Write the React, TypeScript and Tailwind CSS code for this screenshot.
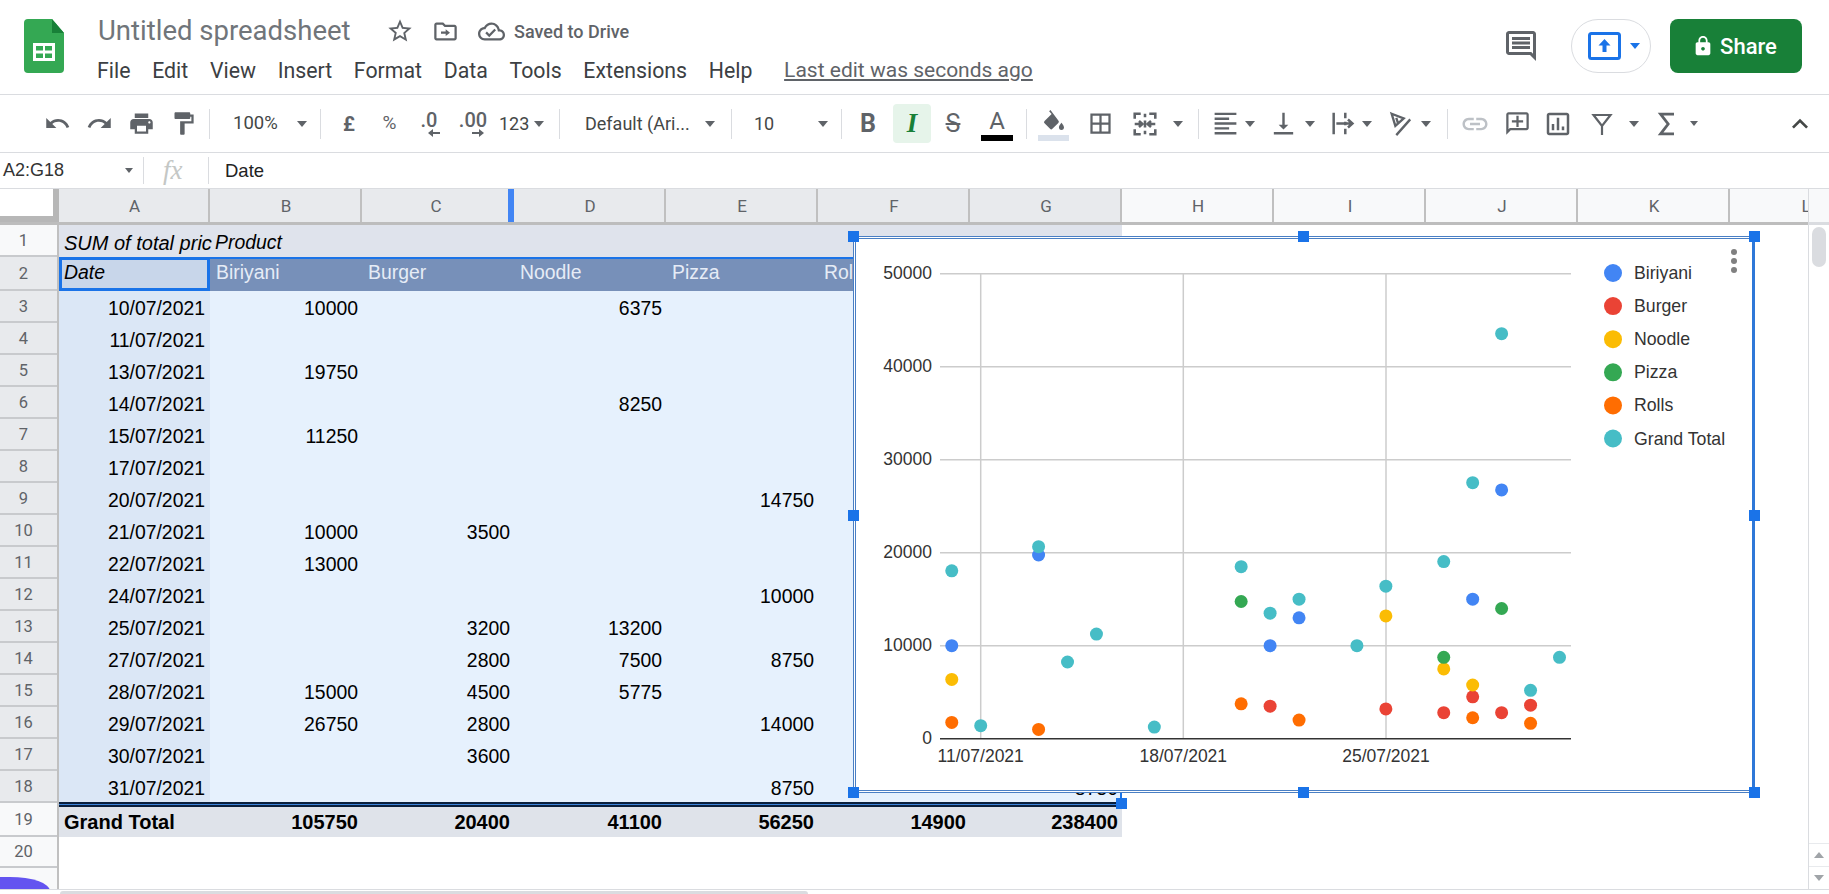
import React from "react";

const icons = {
  undo: "M12.5 8c-2.65 0-5.05.99-6.9 2.6L2 7v9h9l-3.62-3.62c1.39-1.16 3.16-1.88 5.12-1.88 3.54 0 6.55 2.31 7.6 5.5l2.37-.78C21.08 11.03 17.15 8 12.5 8z",
  redo: "M18.4 10.6C16.55 8.99 14.15 8 11.5 8c-4.65 0-8.58 3.03-9.96 7.22L3.9 16c1.05-3.19 4.05-5.5 7.6-5.5 1.95 0 3.73.72 5.12 1.88L13 16h9V7l-3.6 3.6z",
  print: "M19 8H5c-1.66 0-3 1.34-3 3v6h4v4h12v-4h4v-6c0-1.66-1.34-3-3-3zm-3 11H8v-5h8v5zm3-7c-.55 0-1-.45-1-1s.45-1 1-1 1 .45 1 1-.45 1-1 1zm-1-9H6v4h12V3z",
  paint: "M18 4V3c0-.55-.45-1-1-1H5c-.55 0-1 .45-1 1v4c0 .55.45 1 1 1h12c.55 0 1-.45 1-1V6h1v4H9v11c0 .55.45 1 1 1h2c.55 0 1-.45 1-1v-9h8V4h-3z",
  borders: "M3 3v18h18V3H3zm8 16H5v-6h6v6zm0-8H5V5h6v6zm8 8h-6v-6h6v6zm0-8h-6V5h6v6z",
  align: "M15 15H3v2h12v-2zm0-8H3v2h12V7zM3 13h18v-2H3v2zm0 8h18v-2H3v2zM3 3v2h18V3H3z",
  valign: "M16 13h-3V3h-2v10H8l4 4 4-4zM4 19v2h16v-2H4z",
  link: "M3.9 12c0-1.71 1.39-3.1 3.1-3.1h4V7H7c-2.76 0-5 2.24-5 5s2.24 5 5 5h4v-1.9H7c-1.71 0-3.1-1.39-3.1-3.1zM8 13h8v-2H8v2zm9-6h-4v1.9h4c1.71 0 3.1 1.39 3.1 3.1s-1.39 3.1-3.1 3.1h-4V17h4c2.76 0 5-2.24 5-5s-2.24-5-5-5z",
  addComment: "M22 4c0-1.1-.9-2-2-2H4c-1.1 0-2 .9-2 2v12c0 1.1.9 2 2 2h14l4 4V4zm-2 13.17L18.83 16H4V4h16v13.17zM13 5h-2v4H7v2h4v4h2v-4h4V9h-4z",
  chart: "M19 3H5c-1.1 0-2 .9-2 2v14c0 1.1.9 2 2 2h14c1.1 0 2-.9 2-2V5c0-1.1-.9-2-2-2zm0 16H5V5h14v14zM7 12h2v5H7zm4-5h2v10h-2zm4 7h2v3h-2z",
  chevronUp: "M12 8l-6 6 1.41 1.41L12 10.83l4.59 4.58L18 14z",
  star: "M22 9.24l-7.19-.62L12 2 9.19 8.63 2 9.24l5.46 4.73L5.82 21 12 17.27 18.18 21l-1.63-7.03L22 9.24zM12 15.4l-3.76 2.27 1-4.28-3.32-2.88 4.38-.38L12 6.1l1.71 4.04 4.38.38-3.32 2.88 1 4.28L12 15.4z",
  move: "M20 6h-8l-2-2H4c-1.1 0-1.99.9-1.99 2L2 18c0 1.1.9 2 2 2h16c1.1 0 2-.9 2-2V8c0-1.1-.9-2-2-2zm0 12H4V6h5.17l2 2H20v10zM12.16 16l3.84-3-3.84-3v2H8v2h4.16v2z",
  cloud: "M19.35 10.04C18.67 6.59 15.64 4 12 4 9.11 4 6.6 5.64 5.35 8.04 2.34 8.36 0 10.91 0 14c0 3.31 2.69 6 6 6h13c2.76 0 5-2.24 5-5 0-2.64-2.05-4.78-4.65-4.96zM19 18H6c-2.21 0-4-1.79-4-4 0-2.05 1.53-3.76 3.56-3.97l1.07-.11.5-.95C8.08 7.14 9.94 6 12 6c2.62 0 4.88 1.86 5.39 4.43l.3 1.5 1.53.11c1.56.1 2.78 1.41 2.78 2.96 0 1.65-1.35 3-3 3zm-9-3.82l-2.09-2.09L6.5 13.5 10 17l6.01-6.01-1.41-1.41z",
  comments: "M21.99 4c0-1.1-.89-2-1.99-2H4c-1.1 0-2 .9-2 2v12c0 1.1.9 2 2 2h14l4 4-.01-18zM20 4v13.17L18.83 16H4V4h16zM6 12h12v2H6zm0-3h12v2H6zm0-3h12v2H6z",
  lock: "M18 8h-1V6c0-2.76-2.24-5-5-5S7 3.24 7 6v2H6c-1.1 0-2 .9-2 2v10c0 1.1.9 2 2 2h12c1.1 0 2-.9 2-2V10c0-1.1-.9-2-2-2zm-6 9c-1.1 0-2-.9-2-2s.9-2 2-2 2 .9 2 2-.9 2-2 2zm3.1-9H8.9V6c0-1.71 1.39-3.1 3.1-3.1 1.71 0 3.1 1.39 3.1 3.1v2z",
};

function Icon({ d, className = "w-[27px] h-[27px]" }: { d: string; className?: string }) {
  return (
    <svg viewBox="0 0 24 24" fill="currentColor" className={className}>
      <path d={d} />
    </svg>
  );
}

function Slot({ className = "", children }: { className?: string; children: React.ReactNode }) {
  return <div className={`flex h-[40px] shrink-0 items-center justify-center ${className}`}>{children}</div>;
}

function Caret({ className = "" }: { className?: string }) {
  return (
    <svg viewBox="0 0 10 6" fill="currentColor" className={`h-[6px] w-[10px] shrink-0 ${className}`}>
      <path d="M0 0h10L5 6z" />
    </svg>
  );
}

function Sep({ className = "" }: { className?: string }) {
  return <div className={`h-[30px] w-px shrink-0 bg-[#dadce0] ${className}`} />;
}

function Header() {
  const menu = ["File", "Edit", "View", "Insert", "Format", "Data", "Tools", "Extensions", "Help"];
  return (
    <div className="flex h-[95px] shrink-0 border-b-[1.5px] border-[#dadce0]">
      <svg viewBox="0 0 40 54" className="ml-[24px] mt-[19px] h-[54px] w-[40px] shrink-0">
        <path d="M4 0h24l12 14v36a4 4 0 0 1-4 4H4a4 4 0 0 1-4-4V4a4 4 0 0 1 4-4z" fill="#34a853" />
        <path d="M28 0l12 14H28z" fill="#188038" />
        <path d="M9 24h22v18H9z" fill="#fff" />
        <path d="M12 27h7v4.5h-7zM21 27h7v4.5h-7zM12 34.500h7V39h-7zM21 34.500h7V39h-7z" fill="#34a853" />
      </svg>
      <div className="ml-[34px] flex flex-col">
        <div className="mt-[12px] flex h-[38px] items-center text-[#5f6368]">
          <span className="w-[283px] whitespace-nowrap text-[27.500px] text-[#70757a]">Untitled spreadsheet</span>
          <Icon d={icons.star} className="ml-[5px] h-[28px] w-[28px]" />
          <Icon d={icons.move} className="ml-[18px] h-[27px] w-[27px]" />
          <Icon d={icons.cloud} className="ml-[19px] h-[27px] w-[27px]" />
          <span className="ml-[9px] text-[18px] font-medium">Saved to Drive</span>
        </div>
        <div className="-ml-[1px] mt-[3px] flex h-[36px] items-center gap-[21.700px] text-[21.300px] text-[#3c4043]">
          {menu.map((m) => (
            <span key={m}>{m}</span>
          ))}
          <span className="ml-[10px] text-[21px] text-[#5f6368] underline underline-offset-2">Last edit was seconds ago</span>
        </div>
      </div>
      <div className="ml-auto mt-[19px] flex h-[54px] items-center pr-[27px]">
        <Icon d={icons.comments} className="h-[36px] w-[36px] text-[#5f6368]" />
        <div className="ml-[32px] flex h-[54px] w-[80px] items-center rounded-full border border-[#dadce0] pl-[16px] text-[#1a73e8]">
          <svg viewBox="0 0 33 28" className="h-[28px] w-[33px]">
            <rect x="1.500" y="1.500" width="30" height="25" rx="2" fill="none" stroke="currentColor" strokeWidth="3" />
            <path d="M16.500 7l6 6.500h-4V20h-4v-6.500h-4z" fill="currentColor" />
          </svg>
          <Caret className="ml-[9px]" />
        </div>
        <div className="ml-[19px] flex h-[54px] w-[132px] items-center justify-center gap-[6px] rounded-lg bg-[#188038] pr-[3px] text-[22px] font-medium text-white">
          <Icon d={icons.lock} className="h-[22px] w-[22px]" />
          Share
        </div>
      </div>
    </div>
  );
}

function Toolbar() {
  return (
    <div className="flex h-[58px] shrink-0 items-center border-b-[1.5px] border-[#dadce0] pl-[36px] text-[#5f6368]">
      <Slot className="w-[42px]"><Icon d={icons.undo} /></Slot>
      <Slot className="w-[42px]"><Icon d={icons.redo} /></Slot>
      <Slot className="w-[42px]"><Icon d={icons.print} /></Slot>
      <Slot className="w-[42px]"><Icon d={icons.paint} /></Slot>
      <Sep className="ml-[5px]" />
      <span className="ml-[23px] w-[43px] shrink-0 text-[18.500px] text-[#444746]">100%</span>
      <Caret className="ml-[21px]" />
      <Sep className="ml-[13px]" />
      <Slot className="ml-[8px] w-[40px] text-[20px] font-bold">£</Slot>
      <Slot className="w-[41px] text-[19px]">%</Slot>
      <Slot className="w-[38px]">
        <div className="flex flex-col items-center text-[20px] font-medium leading-[20px]">
          .0
          <svg viewBox="0 0 12 8" className="-mt-[1px] ml-[10px] h-[8px] w-[12px]" fill="currentColor"><path d="M0 4l5-4v3h7v2H5v3z" /></svg>
        </div>
      </Slot>
      <Slot className="ml-[5px] w-[40px]">
        <div className="flex flex-col items-center text-[20px] font-medium leading-[20px]">
          .00
          <svg viewBox="0 0 12 8" className="-mt-[1px] ml-[10px] h-[8px] w-[12px]" fill="currentColor"><path d="M12 4L7 0v3H0v2h7v3z" /></svg>
        </div>
      </Slot>
      <span className="ml-[6px] w-[31px] shrink-0 text-[18px] text-[#444746]">123</span>
      <Caret className="ml-[4px]" />
      <Sep className="ml-[15px]" />
      <span className="ml-[25px] w-[104px] shrink-0 whitespace-nowrap text-[18px] text-[#444746]">Default (Ari...</span>
      <Caret className="ml-[16px]" />
      <Sep className="ml-[16px]" />
      <span className="ml-[22px] w-[20px] shrink-0 text-[18px] text-[#444746]">10</span>
      <Caret className="ml-[44px]" />
      <Sep className="ml-[13px]" />
      <Slot className="ml-[6px] w-[40px] text-[25px] font-bold">B</Slot>
      <Slot className="ml-[5px] !h-[39px] w-[38px] rounded bg-[#e6f4ea] text-[27px] font-bold italic text-[#188038] [font-family:'Liberation_Serif',serif]">I</Slot>
      <Slot className="ml-[2px] w-[40px] text-[25px] line-through">S</Slot>
      <Slot className="ml-[4px] w-[40px]">
        <div className="flex flex-col items-center text-[24px] leading-[28px]">
          A
          <div className="h-[6px] w-[32px] bg-black" />
        </div>
      </Slot>
      <Sep className="ml-[9px]" />
      <Slot className="ml-[6px] w-[40px]">
        <div className="flex flex-col items-center">
          <svg viewBox="0 0 28 26" className="mt-[3px] h-[22px] w-[24px]" fill="currentColor">
            <path d="M11 0l-1.600 1.600 3 3L4 13a2 2 0 0 0 0 2.800l6.500 6.500a2 2 0 0 0 2.800 0l7-7a2 2 0 0 0 0-2.800zM24 15s-3 3.300-3 5.500a3 3 0 0 0 6 0c0-2.200-3-5.500-3-5.500z" />
          </svg>
          <div className="mt-[3px] h-[6px] w-[31px] bg-[#dbe2ec]" />
        </div>
      </Slot>
      <Slot className="ml-[7px] w-[40px]"><Icon d={icons.borders} /></Slot>
      <Slot className="ml-[5px] w-[40px]">
        <svg viewBox="0 0 28 28" className="h-[24px] w-[24px]" fill="none" stroke="currentColor" strokeWidth="3">
          <path d="M2 8V2h7M19 2h7v6M2 20v6h7M19 26h7v-6M14 2v4M14 22v4M14 10v8" />
          <path d="M2 14h8M7 10.500l4 3.500-4 3.500M26 14h-8M21 10.500L17 14l4 3.500" />
        </svg>
      </Slot>
      <Caret className="ml-[8px]" />
      <Sep className="ml-[15px]" />
      <Slot className="ml-[11px] w-[30px]"><Icon d={icons.align} className="h-[29px] w-[29px]" /></Slot>
      <Caret className="ml-[5px]" />
      <Slot className="ml-[13px] w-[30px]"><Icon d={icons.valign} className="h-[29px] w-[29px]" /></Slot>
      <Caret className="ml-[7px]" />
      <Slot className="ml-[13px] w-[30px]">
        <svg viewBox="0 0 28 28" className="h-[25px] w-[25px]" fill="none" stroke="currentColor" strokeWidth="2.800">
          <path d="M3 2v24M16 2v6M16 20v6M16 12v4M6 14h18M19 9.500l5 4.500-5 4.500" />
        </svg>
      </Slot>
      <Caret className="ml-[4px]" />
      <Slot className="ml-[13px] w-[30px]">
        <svg viewBox="0 0 28 28" className="h-[26px] w-[26px]" fill="none" stroke="currentColor" strokeWidth="2.500">
          <path d="M5 3l13 5-9 8zM10 7.500l2 6M10 26L25 9" />
        </svg>
      </Slot>
      <Caret className="ml-[6px]" />
      <Sep className="ml-[16px]" />
      <Slot className="ml-[7px] w-[40px] text-[#bdc1c6]"><Icon d={icons.link} className="h-[30px] w-[30px]" /></Slot>
      <Slot className="ml-[2px] w-[40px]"><Icon d={icons.addComment} className="h-[27px] w-[27px] -scale-x-100" /></Slot>
      <Slot className="ml-[1px] w-[40px]"><Icon d={icons.chart} className="h-[30px] w-[30px]" /></Slot>
      <Slot className="ml-[4px] w-[40px]">
        <svg viewBox="0 0 24 24" className="h-[24px] w-[24px]" fill="none" stroke="currentColor" strokeWidth="2.200">
          <path d="M3.500 3h17L12 14zM12 14v9" />
        </svg>
      </Slot>
      <Caret className="ml-[7px]" />
      <Slot className="ml-[8px] w-[40px]">
        <svg viewBox="0 0 24 24" className="h-[28px] w-[28px]" fill="none" stroke="currentColor" strokeWidth="2.400">
          <path d="M18 3.500H6.500L13 12l-6.500 8.500H18" />
        </svg>
      </Slot>
      <Caret className="ml-[3px] !h-[5px] !w-[8px]" />
      <Slot className="ml-auto mr-[9px] w-[40px]"><Icon d={icons.chevronUp} className="h-[32px] w-[32px] text-[#444746]" /></Slot>
    </div>
  );
}

function FormulaBar() {
  return (
    <div className="flex h-[36px] shrink-0 items-center border-b-[1.5px] border-[#dadce0] [font-family:'Liberation_Sans',sans-serif]">
      <span className="ml-[3px] w-[100px] text-[18px] text-[#333]">A2:G18</span>
      <Caret className="ml-[22px] !h-[5px] !w-[8px] text-[#5f6368]" />
      <div className="ml-[10px] h-[27px] w-px bg-[#dadce0]" />
      <span className="ml-[19px] w-[45px] text-[27px] italic text-[#c4c7c5] [font-family:'Liberation_Serif',serif]">fx</span>
      <div className="h-[27px] w-px bg-[#dadce0]" />
      <span className="ml-[16px] text-[18.500px] text-[#222]">Date</span>
    </div>
  );
}

function ColumnHeaders() {
  const selected = ["A", "B", "C", "D", "E", "F", "G"];
  const rest = ["H", "I", "J", "K", "L"];
  return (
    <div className="flex h-[36px] shrink-0 text-[17px] text-[#5f6368]">
      <div className="flex w-[1808px] overflow-hidden border-b-[3px] border-[#bdbdbd]">
        <div className="h-[33px] w-[59px] shrink-0">
          <div className="box-content h-[27px] w-[53px] border-b-[6px] border-r-[6px] border-[#b7b7b7]" />
        </div>
        {selected.map((c, i) => (
          <div
            key={c}
            className={`flex shrink-0 items-center justify-center border-r-2 bg-[#e8eaed] pl-[2px] pt-[2px] ${i === 0 ? "w-[151px]" : "w-[152px]"} ${c === "C" ? "!border-r-[6px] border-[#4285f4]" : "border-[#c0c0c0]"}`}
          >
            {c}
          </div>
        ))}
        {rest.map((c) => (
          <div key={c} className="flex w-[152px] shrink-0 items-center justify-center border-r-2 border-[#c0c0c0] bg-[#f8f9fa] pl-[2px] pt-[2px]">
            {c}
          </div>
        ))}
      </div>
      <div className="w-[21px] border-b-[3px] border-l border-[#dadce0] bg-[#f8f9fa]" />
    </div>
  );
}

const rows: string[][] = [
  ["10/07/2021", "10000", "", "6375", "", ""],
  ["11/07/2021", "", "", "", "", ""],
  ["13/07/2021", "19750", "", "", "", ""],
  ["14/07/2021", "", "", "8250", "", ""],
  ["15/07/2021", "11250", "", "", "", ""],
  ["17/07/2021", "", "", "", "", ""],
  ["20/07/2021", "", "", "", "14750", ""],
  ["21/07/2021", "10000", "3500", "", "", ""],
  ["22/07/2021", "13000", "", "", "", ""],
  ["24/07/2021", "", "", "", "10000", ""],
  ["25/07/2021", "", "3200", "13200", "", ""],
  ["27/07/2021", "", "2800", "7500", "8750", ""],
  ["28/07/2021", "15000", "4500", "5775", "", ""],
  ["29/07/2021", "26750", "2800", "", "14000", ""],
  ["30/07/2021", "", "3600", "", "", ""],
  ["31/07/2021", "", "", "", "8750", ""],
];

function RowHeaders() {
  const nums = Array.from({ length: 21 }, (_, i) => i + 1);
  return (
    <div className="flex w-[59px] shrink-0 flex-col border-r-2 border-[#c0c0c0] text-[16.500px] text-[#5f6368]">
      {nums.map((n) => {
        const active = n >= 2 && n <= 18;
        const h = n === 2 || n === 19 ? "h-[34px]" : n === 20 ? "h-[31px]" : "h-[32px]";
        return (
          <div key={n} className={`flex shrink-0 items-center justify-center border-b-2 border-[#c8cacd] pr-[10px] pt-[2px] ${h} ${active ? "bg-[#e8eaed]" : "bg-[#f8f9fa]"}`}>
            {n <= 20 ? n : ""}
          </div>
        );
      })}
    </div>
  );
}

function Cells() {
  const heads = ["Biriyani", "Burger", "Noodle", "Pizza", "Rolls"];
  const totals = ["105750", "20400", "41100", "56250", "14900", "238400"];
  return (
    <div className="flex w-[1063px] shrink-0 flex-col text-[19.400px] text-black [font-family:'Liberation_Sans',sans-serif]">
      <div className="flex h-[32px] shrink-0 items-center bg-[#dfe3ec] pt-[3px] text-[20px] italic">
        <span className="w-[158px] whitespace-nowrap pl-[5px]">SUM of total pric</span>
        <span className="-ml-[2px] text-[19.400px]">Product</span>
      </div>
      <div className="grid h-[34px] shrink-0 grid-cols-[151px_repeat(6,152px)] bg-[#7790b9] text-[#e6ecf6]">
        <div className="border-[3px] border-[#1a73e8] bg-[#c8d6ea] pl-[2px] italic leading-[24px] text-black">Date</div>
        {heads.map((h) => (
          <div key={h} className="pl-[6px] pt-[1px]">{h}</div>
        ))}
      </div>
      {rows.map((r, i) => (
        <div key={r[0]} className={`grid shrink-0 grid-cols-[151px_repeat(6,152px)] bg-[#e6f1fd] ${i === 15 ? "h-[31px]" : "h-[32px]"}`}>
          <div className="bg-[#dbe7f6] pr-[5px] pt-[3px] text-right">{r[0]}</div>
          {r.slice(1).map((v, j) => (
            <div key={j} className="pr-[4px] pt-[3px] text-right">{v}</div>
          ))}
          <div className="pr-[4px] pt-[3px] text-right">{i === 15 ? "8750" : ""}</div>
        </div>
      ))}
      <div className="h-[5px] shrink-0 border-y-2 border-[#0a1f3d] bg-[#3b82d8]" />
      <div className="grid h-[30px] shrink-0 grid-cols-[151px_repeat(6,152px)] items-center bg-[#dfe3ea] text-[20px] font-bold">
        <div className="pl-[5px]">Grand Total</div>
        {totals.map((t) => (
          <div key={t} className="pr-[4px] text-right">{t}</div>
        ))}
      </div>
    </div>
  );
}

type Pt = [number, number];
const series: { name: string; color: string; pts: Pt[] }[] = [
  { name: "Biriyani", color: "#4285f4", pts: [[10, 10000], [13, 19750], [21, 10000], [22, 13000], [28, 15000], [29, 26750]] },
  { name: "Burger", color: "#ea4335", pts: [[21, 3500], [25, 3200], [27, 2800], [28, 4500], [29, 2800], [30, 3600]] },
  { name: "Noodle", color: "#fbbc04", pts: [[10, 6375], [25, 13200], [27, 7500], [28, 5775]] },
  { name: "Pizza", color: "#34a853", pts: [[20, 14750], [27, 8750], [29, 14000]] },
  { name: "Rolls", color: "#ff6d01", pts: [[10, 1750], [13, 1000], [20, 3750], [22, 2000], [28, 2250], [30, 1650]] },
  {
    name: "Grand Total",
    color: "#46bdc6",
    pts: [[10, 18050], [11, 1400], [13, 20650], [14, 8250], [15, 11250], [17, 1250], [20, 18500], [21, 13500], [22, 15000], [24, 10000], [25, 16400], [27, 19050], [28, 27525], [29, 43550], [30, 5200], [31, 8750]],
  },
];

const px = (d: number) => 980.7 + (d - 11) * 28.94;
const py = (v: number) => 738.7 - v * 0.0093;

function Handle({ className }: { className: string }) {
  return <div className={`absolute h-[11px] w-[11px] bg-[#1a73e8] ${className}`} />;
}

function Chart() {
  return (
    <div className="absolute left-[853px] top-[11px] h-[557px] w-[902px] border-[3px] border-double border-y-[#4a7fc4] border-l-[#4a7fc4] border-r-[#2f78d8] bg-white [border-right-style:solid] [font-family:'Liberation_Sans',sans-serif]">
      <svg viewBox="856 239 896 551" className="h-full w-full">
        {[0, 10000, 20000, 30000, 40000, 50000].map((v) => (
          <g key={v}>
            {v > 0 && <line x1="940" x2="1571" y1={py(v)} y2={py(v)} stroke="#ccc" strokeWidth="1.500" />}
            <text x="932" y={py(v) + 5} textAnchor="end" fontSize="17.500" fill="#333">{v}</text>
          </g>
        ))}
        {([[980.7, "11/07/2021"], [1183.3, "18/07/2021"], [1386, "25/07/2021"]] as [number, string][]).map(([x, t]) => (
          <g key={t}>
            <line x1={x} x2={x} y1="273" y2="738" stroke="#ccc" strokeWidth="1.500" />
            <text x={x} y="762" textAnchor="middle" fontSize="17.500" fill="#333">{t}</text>
          </g>
        ))}
        <line x1="940" x2="1571" y1="738.700" y2="738.700" stroke="#333" strokeWidth="1.500" />
        {series.map((s) =>
          s.pts.map(([d, v]) => <circle key={`${s.name}${d}`} cx={px(d)} cy={py(v)} r="6.500" fill={s.color} />)
        )}
        {series.map((s, i) => (
          <g key={s.name}>
            <circle cx="1613" cy={273 + i * 33.100} r="9" fill={s.color} />
            <text x="1634" y={279 + i * 33.100} fontSize="17.700" fill="#333">{s.name}</text>
          </g>
        ))}
        {[252, 261, 270].map((y) => (
          <circle key={y} cx="1734" cy={y} r="3" fill="#808080" />
        ))}
      </svg>
      <Handle className="-left-[8px] -top-[8px]" />
      <Handle className="left-[442px] -top-[8px]" />
      <Handle className="-right-[8px] -top-[8px]" />
      <Handle className="-left-[8px] top-[271px]" />
      <Handle className="-right-[8px] top-[271px]" />
      <Handle className="-bottom-[8px] -left-[8px]" />
      <Handle className="-bottom-[8px] left-[442px]" />
      <Handle className="-bottom-[8px] -right-[8px]" />
    </div>
  );
}

function VScrollbar() {
  return (
    <div className="flex w-[21px] shrink-0 flex-col items-center border-l border-[#dadce0] text-[#a0a4a8]">
      <div className="mt-[2px] h-[40px] w-[14px] rounded-full bg-[#dadce0]" />
      <div className="mt-auto flex h-[24px] w-full items-center justify-center border-y border-[#e8eaed]">
        <svg viewBox="0 0 10 6" className="h-[6px] w-[10px]" fill="currentColor"><path d="M0 6h10L5 0z" /></svg>
      </div>
      <div className="flex h-[22px] w-full items-center justify-center">
        <Caret />
      </div>
    </div>
  );
}

export default function App() {
  return (
    <div className="flex h-[894px] w-[1829px] flex-col overflow-hidden bg-white [font-family:Roboto,sans-serif]">
      <Header />
      <Toolbar />
      <FormulaBar />
      <ColumnHeaders />
      <div className="flex h-[664px] shrink-0">
        <div className="relative flex w-[1808px] shrink-0 overflow-hidden">
          <RowHeaders />
          <Cells />
          {/* selection range edge, mostly under the chart */}
          <div className="pointer-events-none absolute left-[210px] top-[32px] h-[546px] w-[912px] border-r-2 border-t-2 border-[#1a73e8]" />
          <Chart />
          <Handle className="left-[1116px] top-[573px]" />
          <div className="absolute left-0 top-[652px] h-[20px] w-[50px] rounded-tr-[40px_14px] bg-[#6354f0]" />
        </div>
        <VScrollbar />
      </div>
      <div className="flex h-[5px] shrink-0 border-t border-[#dadce0]">
        <div className="ml-[60px] mt-[1px] h-[3px] w-[748px] rounded-t bg-[#dadce0]" />
      </div>
    </div>
  );
}
